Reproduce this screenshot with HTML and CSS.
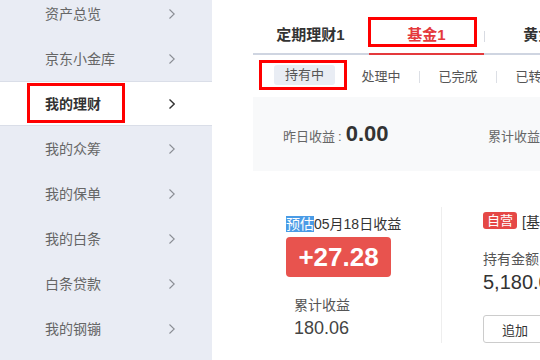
FILE: index.html
```html
<!DOCTYPE html>
<html lang="zh-CN">
<head>
<meta charset="utf-8">
<title>我的理财</title>
<link rel="stylesheet" href="styles.css">
</head>
<body>
<aside class="sidebar">
  <ul class="nav-list">
    <li class="nav-item"><span>资产总览</span><svg class="chev" viewBox="0 0 6 10"><polyline points="0.5,0.5 5.2,5 0.5,9.5"/></svg></li>
    <li class="nav-item"><span>京东小金库</span><svg class="chev" viewBox="0 0 6 10"><polyline points="0.5,0.5 5.2,5 0.5,9.5"/></svg></li>
    <li class="nav-item active"><span>我的理财</span><svg class="chev" viewBox="0 0 6 10"><polyline points="0.5,0.5 5.2,5 0.5,9.5"/></svg></li>
    <li class="nav-item"><span>我的众筹</span><svg class="chev" viewBox="0 0 6 10"><polyline points="0.5,0.5 5.2,5 0.5,9.5"/></svg></li>
    <li class="nav-item"><span>我的保单</span><svg class="chev" viewBox="0 0 6 10"><polyline points="0.5,0.5 5.2,5 0.5,9.5"/></svg></li>
    <li class="nav-item"><span>我的白条</span><svg class="chev" viewBox="0 0 6 10"><polyline points="0.5,0.5 5.2,5 0.5,9.5"/></svg></li>
    <li class="nav-item"><span>白条贷款</span><svg class="chev" viewBox="0 0 6 10"><polyline points="0.5,0.5 5.2,5 0.5,9.5"/></svg></li>
    <li class="nav-item"><span>我的钢镚</span><svg class="chev" viewBox="0 0 6 10"><polyline points="0.5,0.5 5.2,5 0.5,9.5"/></svg></li>
  </ul>
</aside>
<main class="main">
  <nav class="tabs">
    <div class="tab">定期理财1</div>
    <span class="tab-sep"></span>
    <div class="tab active">基金1</div>
    <span class="tab-sep"></span>
    <div class="tab">黄金1</div>
  </nav>
  <div class="subtabs">
    <div class="subtab active"><span class="pill">持有中</span></div>
    <div class="subtab">处理中</div>
    <span class="sub-sep"></span>
    <div class="subtab">已完成</div>
    <span class="sub-sep"></span>
    <div class="subtab">已转让</div>
  </div>
  <section class="summary">
    <div class="sum-item first"><span class="sum-label">昨日收益</span><span class="colon">:</span><span class="sum-value">0.00</span></div>
    <div class="sum-item"><span class="sum-label">累计收益</span><span class="colon">:</span><span class="sum-value">180.06</span></div>
  </section>
  <section class="detail">
    <div class="col-left">
      <div class="est-row"><span class="est">预估</span>05月18日收益</div>
      <div class="gain">+27.28</div>
      <div class="total-label">累计收益</div>
      <div class="total-value">180.06</div>
    </div>
    <div class="col-right">
      <div class="fund-row"><span class="badge">自营</span><span class="fund-name">[基金] 南方现金增利货币A</span></div>
      <div class="hold-label">持有金额</div>
      <div class="hold-value">5,180.00</div>
      <button class="btn">追加</button>
    </div>
  </section>
</main>
</body>
</html>
```
FILE: styles.css
```css
*, *::before, *::after { box-sizing: border-box; }
html, body { margin: 0; padding: 0; }
body {
  width: 540px;
  height: 360px;
  overflow: hidden;
  display: flex;
  background: #fff;
  font-family: "Liberation Sans", "Noto Sans CJK SC", sans-serif;
  color: #333;
}
.sidebar {
  width: 212px;
  flex: none;
  background: #e9ecf4;
  height: 360px;
  overflow: hidden;
}
.nav-list {
  list-style: none;
  margin: -9px 0 0;
  padding: 0;
}
.nav-item {
  position: relative;
  height: 45px;
  display: flex;
  align-items: center;
  justify-content: space-between;
  padding: 0 37px 0 45px;
  font-size: 14px;
  line-height: 16px;
  color: #666;
}
.chev {
  width: 6px;
  height: 10px;
  fill: none;
  stroke: #8a8d94;
  stroke-width: 1.1;
}
.nav-item.active {
  background: #fff;
  border-top: 1px solid #dadee8;
  border-bottom: 1px solid #dadee8;
  color: #333;
  font-weight: bold;
}
.nav-item.active .chev { stroke: #333; stroke-width: 1.4; }
.nav-item.active::after {
  content: "";
  position: absolute;
  left: 27px;
  top: 1px;
  width: 98px;
  height: 40px;
  border: 3px solid #ff0000;
}
.main {
  flex: 1;
  min-width: 0;
  padding-left: 41px;
  overflow: hidden;
  white-space: nowrap;
}
.tabs {
  display: flex;
  align-items: stretch;
  margin-top: 17px;
  border-bottom: 2px solid #cfd5e1;
}
.tab {
  position: relative;
  flex: none;
  width: 115px;
  height: 36px;
  padding-bottom: 1px;
  display: flex;
  align-items: center;
  justify-content: center;
  font-size: 15px;
  line-height: 16px;
  font-weight: bold;
  color: #333;
}
.tab.active {
  height: 38px;
  color: #e4393c;
  border-bottom: 2px solid #e4393c;
  margin-bottom: -2px;
}
.tab.active::after {
  content: "";
  position: absolute;
  left: -1px;
  top: 0;
  width: 109px;
  height: 30px;
  border: 3px solid #ff0000;
}
.tab-sep {
  flex: none;
  width: 1px;
  height: 11px;
  align-self: center;
  margin-top: 2px;
  background: #d8dbe2;
}
.subtabs {
  display: flex;
  align-items: center;
  height: 30px;
  margin-top: 5px;
  padding-left: 13px;
}
.subtab {
  position: relative;
  flex: none;
  width: 76px;
  height: 30px;
  display: flex;
  align-items: center;
  justify-content: center;
  font-size: 13px;
  color: #555;
}
.subtab.active { width: 77px; }
.subtab.active::after {
  content: "";
  position: absolute;
  left: -7px;
  top: 0;
  width: 88px;
  height: 30px;
  border: 3px solid #ff0000;
}
.pill {
  display: inline-block;
  width: 61px;
  height: 20px;
  line-height: 20px;
  text-align: center;
  background: #e9edf4;
  border-radius: 3px;
}
.sub-sep {
  flex: none;
  width: 1px;
  height: 12px;
  margin-top: 3px;
  background: #dcdfe5;
}
.summary {
  display: flex;
  align-items: center;
  height: 74px;
  margin-top: 7px;
  padding-left: 30px;
  background: #f8f9fa;
}
.sum-item {
  display: flex;
  align-items: baseline;
  flex: none;
}
.sum-item.first { width: 205px; }
.sum-label {
  font-size: 13px;
  color: #666;
}
.colon {
  font-size: 13px;
  color: #666;
  margin: 0 4px 0 3px;
}
.sum-value {
  font-size: 22px;
  font-weight: bold;
  color: #333;
}
.detail {
  display: flex;
  height: 136px;
  margin-top: 36px;
}
.col-left {
  flex: none;
  width: 188px;
  padding: 9px 0 0 33px;
}
.est-row {
  font-size: 14px;
  line-height: 16px;
  color: #333;
}
.est {
  background: #4a9be6;
  color: #fff;
}
.gain {
  width: 105px;
  height: 40px;
  margin-top: 5px;
  border-radius: 4px;
  background: #e8534e;
  color: #fff;
  font-size: 26px;
  font-weight: bold;
  line-height: 40px;
  text-align: center;
}
.total-label {
  margin: 20px 0 0 8px;
  font-size: 14px;
  line-height: 16px;
  color: #555;
}
.total-value {
  margin: 4px 0 0 8px;
  font-size: 18px;
  line-height: 22px;
  color: #444;
}
.col-right {
  flex: 1;
  border-left: 1px solid #eeeeee;
  padding: 5px 0 0 41px;
}
.fund-row {
  display: flex;
  align-items: center;
  height: 17px;
}
.badge {
  display: inline-block;
  width: 34px;
  height: 17px;
  line-height: 17px;
  text-align: center;
  border-radius: 3px;
  background: #e54846;
  color: #fff;
  font-size: 13px;
}
.fund-name {
  margin-left: 5px;
  font-size: 14px;
  color: #333;
}
.hold-label {
  margin-top: 22px;
  font-size: 14px;
  line-height: 16px;
  color: #555;
}
.hold-value {
  margin-top: 4px;
  font-size: 20px;
  line-height: 22px;
  color: #333;
}
.btn {
  display: block;
  margin-top: 22px;
  width: 64px;
  height: 28px;
  padding: 0;
  border: 1px solid #cccccc;
  border-radius: 3px;
  background: #fff;
  font-family: inherit;
  font-size: 13px;
  color: #333;
}
```
